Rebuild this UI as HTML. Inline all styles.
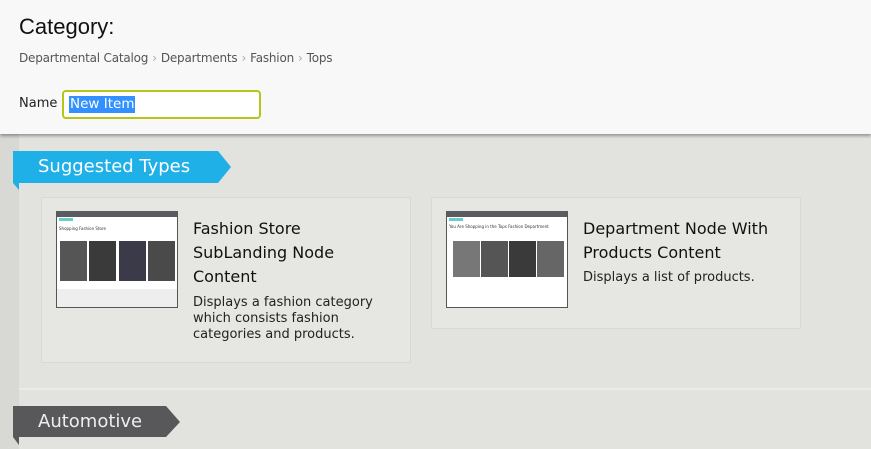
<!DOCTYPE html>
<html><head><style>
body{margin:0;width:871px;height:449px;overflow:hidden;position:relative;background:#d8d8d4;font-family:"DejaVu Sans",Verdana,sans-serif;}
.hdr{position:absolute;left:0;top:0;width:871px;height:134px;background:#f8f8f8;box-shadow:0 2px 3px rgba(0,0,0,.35);z-index:2}
.main{position:absolute;left:19px;top:134px;width:852px;height:315px;background:#e2e2de}
.sep{position:absolute;left:19px;top:388px;width:852px;height:2px;background:#ebebe8}
h1{position:absolute;left:19px;top:14px;margin:0;font:400 22px "Liberation Sans",Arial,sans-serif;color:#111}
.bc{position:absolute;left:19px;top:51px;font-size:12px;color:#555;letter-spacing:-0.2px}
.bc span{color:#aaa;margin:0 4px}
.nm{position:absolute;left:19px;top:96px;font-size:13px;color:#222}
.inp{position:absolute;left:62px;top:90px;width:195px;height:25px;border:2px solid #b5c619;border-radius:4px;background:#fff}
.inp b{position:absolute;left:5px;top:4px;background:#3390ff;color:#fff;font-weight:400;font-size:13.5px;padding:0 1px;line-height:17px}
.ban{position:absolute;left:13px;height:32px;color:#fff;font-size:18px;line-height:31px;padding-left:25px;box-sizing:border-box}
.card{position:absolute;top:197px;background:#e6e6e2;border:1px solid #d8d8d4;border-radius:2px}
.th{position:absolute;width:122px;height:97px;background:#fff;border:1px solid #555;border-top:6px solid #595b60;box-sizing:border-box;overflow:hidden}
.t{position:absolute;font-size:16px;line-height:24px;color:#111}
.d{position:absolute;font-size:13px;line-height:16px;color:#222}
.ph{position:absolute;top:28px;width:27px;height:36px;background:#444}
</style></head><body>
<div class="main"></div><div class="sep"></div>
<div class="hdr">
<h1>Category:</h1>
<div class="bc">Departmental Catalog<span>›</span>Departments<span>›</span>Fashion<span>›</span>Tops</div>
<div class="nm">Name</div>
<div class="inp"><b>New Item</b></div>
</div>
<svg style="position:absolute;left:13px;top:151px" width="220" height="40"><polygon points="0,0 205,0 218,16 205,32 6,32 6,39 0,32" fill="#1eb0e6"/></svg>
<div class="ban" style="top:151px">Suggested Types</div>
<div class="card" style="left:41px;width:368px;height:164px"></div>
<div class="th" style="left:56px;top:211px">
<div style="position:absolute;left:2px;top:1px;width:14px;height:3px;background:#6cc"></div>
<div style="position:absolute;left:2px;top:9px;font-size:4px;color:#333">Shopping Fashion Store</div>
<div class="ph" style="left:3px;top:24px;height:40px;background:#555"></div><div class="ph" style="left:32px;top:24px;height:40px;background:#3a3a3a"></div><div class="ph" style="left:62px;top:24px;height:40px;background:#3a3a48"></div><div class="ph" style="left:91px;top:24px;height:40px;background:#4a4a4a"></div>
<div style="position:absolute;left:0;top:72px;width:122px;height:20px;background:#eee"></div>
</div>
<div class="t" style="left:193px;top:217px">Fashion Store<br>SubLanding Node<br>Content</div>
<div class="d" style="left:193px;top:295px">Displays a fashion category<br>which consists fashion<br>categories and products.</div>
<div class="card" style="left:431px;width:368px;height:130px"></div>
<div class="th" style="left:446px;top:211px">
<div style="position:absolute;left:2px;top:1px;width:14px;height:3px;background:#6cc"></div>
<div style="position:absolute;left:2px;top:7px;font-size:4px;color:#333">You Are Shopping in the Tops Fashion Department</div>
<div class="ph" style="left:6px;top:24px;background:#777"></div><div class="ph" style="left:34px;top:24px;background:#555"></div><div class="ph" style="left:62px;top:24px;background:#3a3a3a"></div><div class="ph" style="left:90px;top:24px;background:#666"></div>
</div>
<div class="t" style="left:583px;top:217px">Department Node With<br>Products Content</div>
<div class="d" style="left:583px;top:270px">Displays a list of products.</div>
<svg style="position:absolute;left:13px;top:406px" width="170" height="40"><polygon points="0,0 153,0 167,16 153,31 6,31 6,39 0,31" fill="#58585a"/></svg>
<div class="ban" style="top:406px;color:#eee">Automotive</div>
</body></html>
